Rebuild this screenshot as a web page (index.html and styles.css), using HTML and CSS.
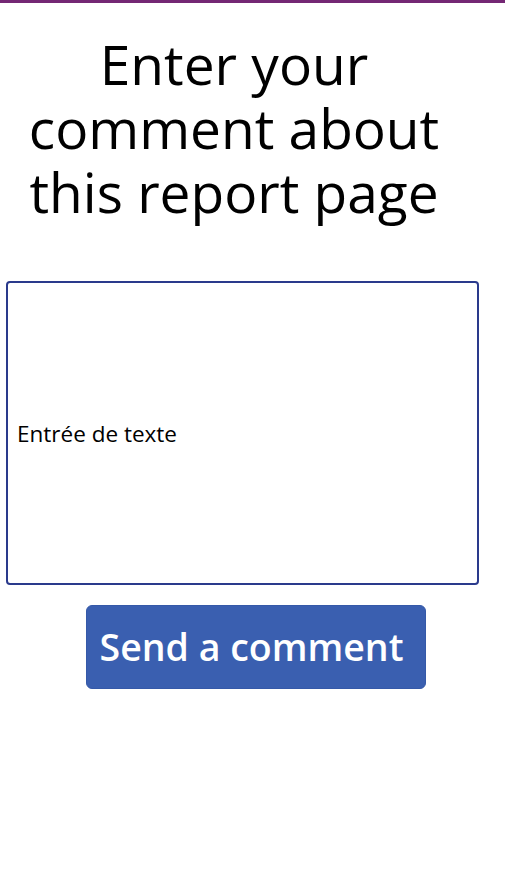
FILE: index.html
```html
<!DOCTYPE html>
<html lang="en">
<head>
    <meta charset="UTF-8">
    <meta name="viewport" content="width=device-width, initial-scale=1.0">
    <title>Comment</title>
    <link rel="stylesheet" href="styles.css">
</head>
<body>
    <div class="top-bar"></div>
    <div class="screen">
        <h1 class="title">Enter your comment about this report page</h1>
        <div class="text-input">
            <span class="text-value">Entrée de texte</span>
        </div>
        <button class="send-btn">Send a comment</button>
    </div>
</body>
</html>
```

FILE: styles.css
```css
body {
    margin: 0;
    font-family: 'Open Sans', sans-serif;
    background-color: #ffffff;
    color: #000000;
}

.top-bar {
    height: 3px;
    background-color: #742774;
}

.screen {
    display: flex;
    flex-direction: column;
    align-items: flex-start;
}

.title {
    width: 468px;
    margin: 29px 0 0 0;
    font-size: 55px;
    font-weight: 500;
    line-height: 64px;
    text-align: center;
}

.text-input {
    box-sizing: border-box;
    width: 473px;
    height: 304px;
    margin: 57px 0 0 6px;
    border: 2px solid #2a3a8c;
    border-radius: 4px;
    display: flex;
    align-items: center;
    padding-left: 9px;
}

.text-value {
    font-size: 22.5px;
}

.send-btn {
    box-sizing: border-box;
    width: 340px;
    height: 84px;
    margin: 20px 0 0 86px;
    padding: 0 9px 2px 0;
    background-color: #3a5fb0;
    color: #ffffff;
    border: 1px solid #3559a8;
    border-radius: 6px;
    font-family: 'Open Sans', sans-serif;
    font-size: 37.5px;
    font-weight: 600;
    white-space: nowrap;
    cursor: pointer;
}
```
